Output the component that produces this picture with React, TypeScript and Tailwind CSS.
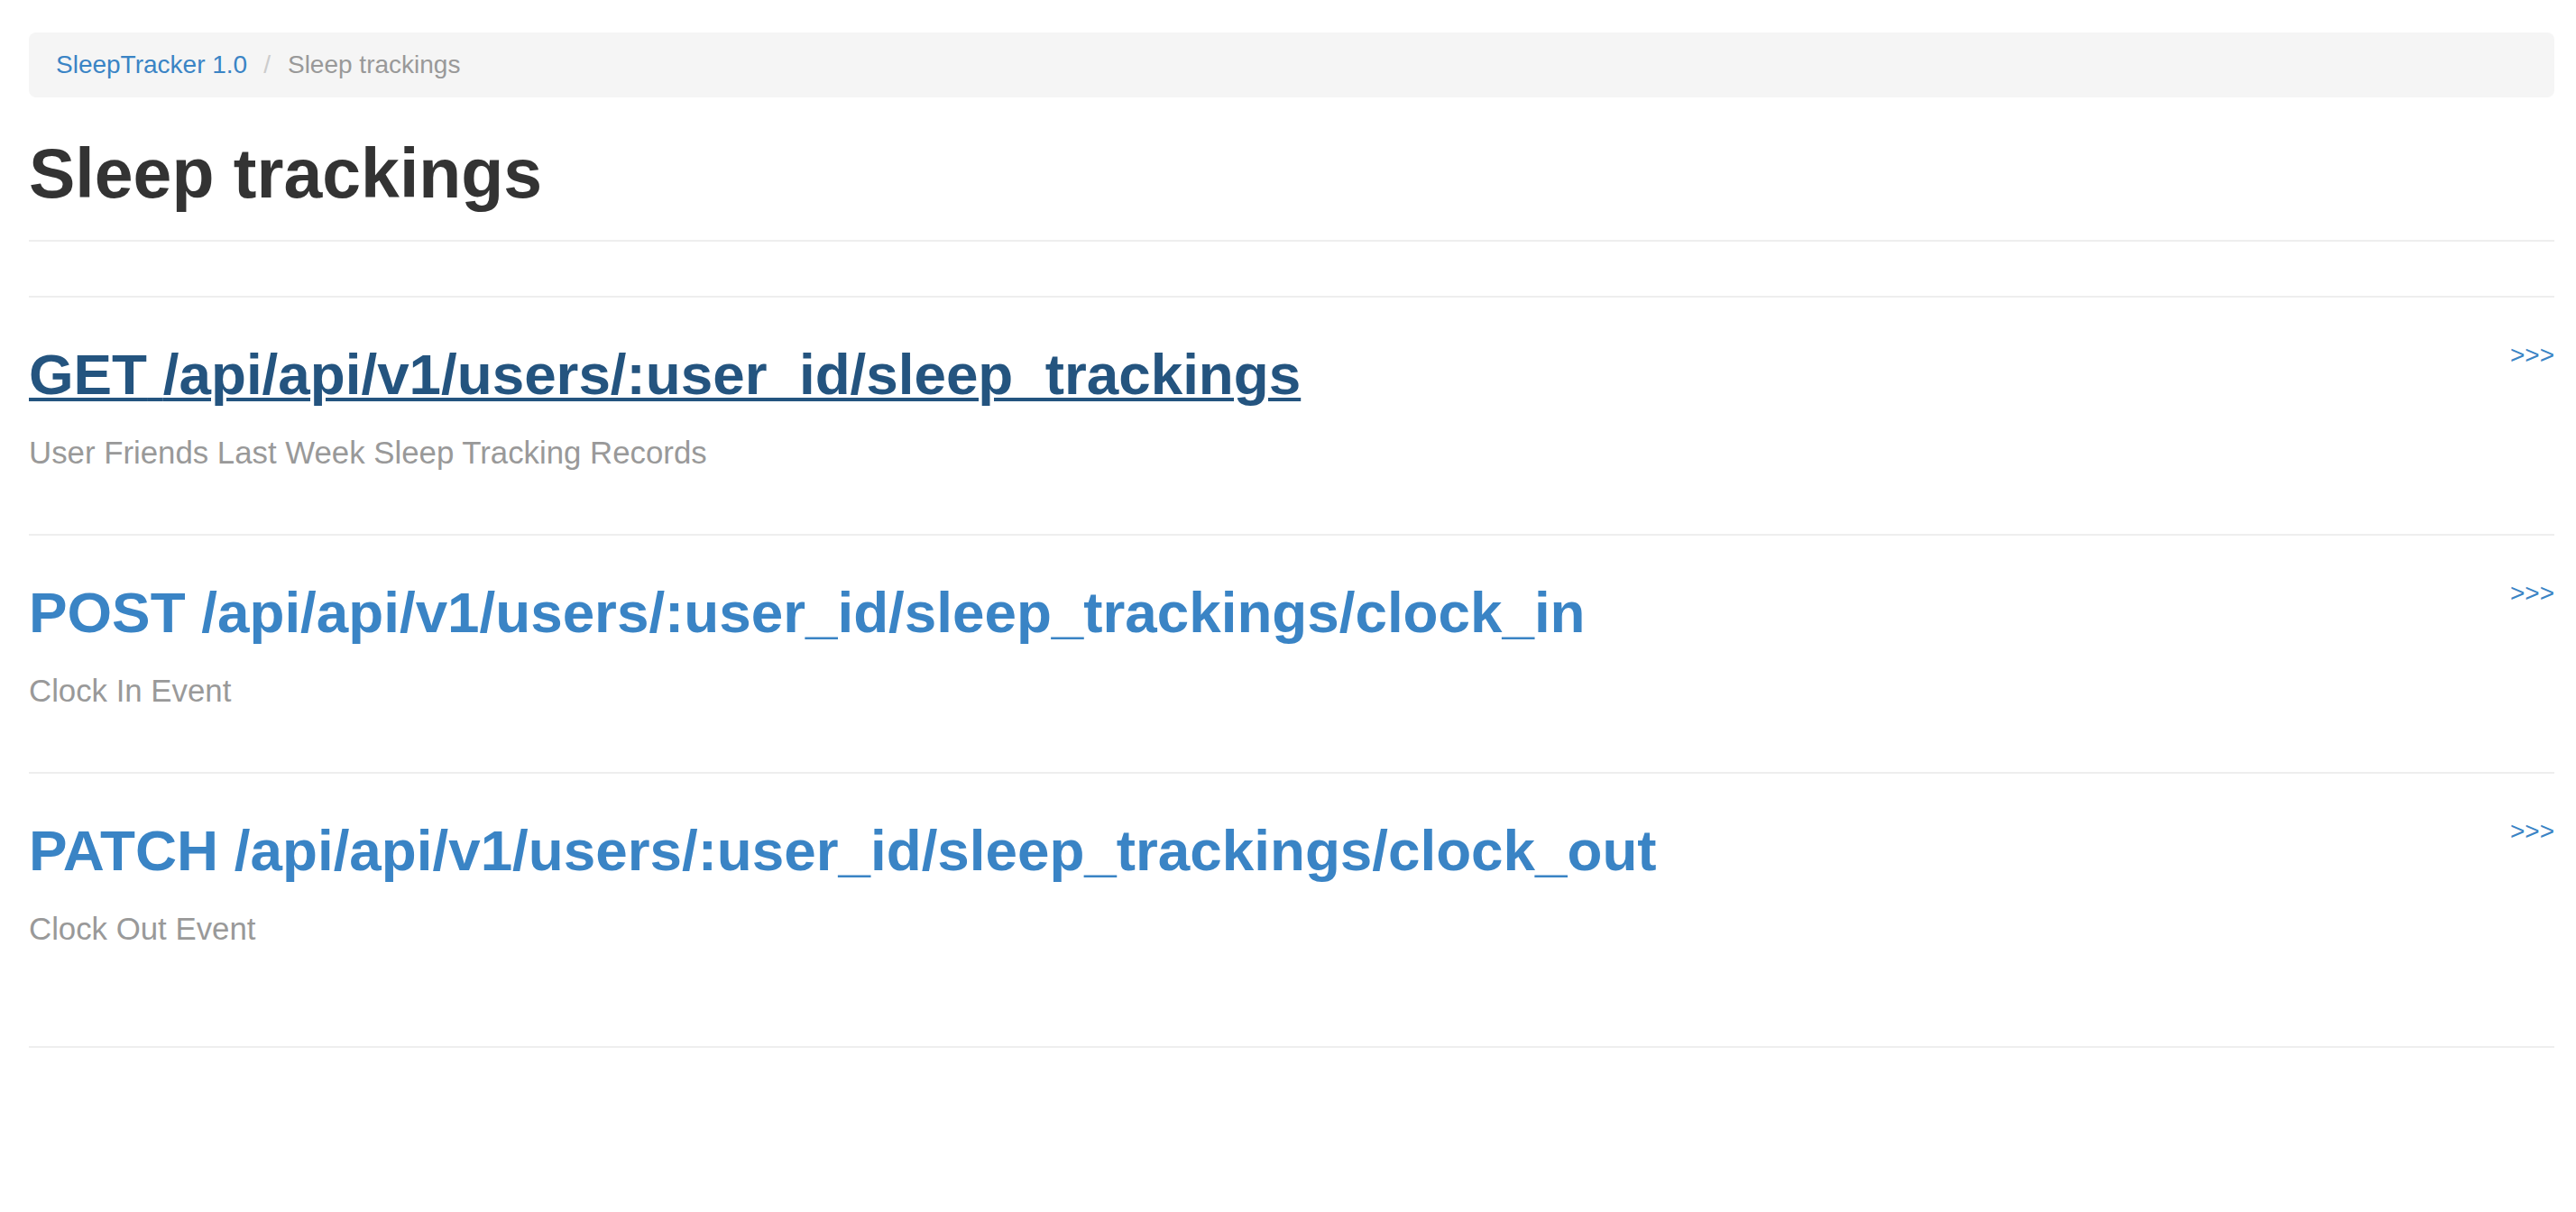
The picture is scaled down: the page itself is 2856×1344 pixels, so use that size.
const FONT = "font-['Liberation_Sans',Arial,sans-serif]";

type Endpoint = {
  method: string;
  path: string;
  description: string;
  active?: boolean;
};

const ENDPOINTS: Endpoint[] = [
  {
    method: "GET",
    path: "/api/api/v1/users/:user_id/sleep_trackings",
    description: "User Friends Last Week Sleep Tracking Records",
    active: true,
  },
  {
    method: "POST",
    path: "/api/api/v1/users/:user_id/sleep_trackings/clock_in",
    description: "Clock In Event",
  },
  {
    method: "PATCH",
    path: "/api/api/v1/users/:user_id/sleep_trackings/clock_out",
    description: "Clock Out Event",
  },
];

export default function App() {
  return (
    <div className={`min-h-screen bg-white ${FONT}`}>
      <div className="ml-[32px] w-[2800px] pt-[36px]">
        <Breadcrumb />

        <div className="border-b-2 border-[#eeeeee] pb-[31px]">
          <h1 className="mt-[42px] text-[77px] font-bold leading-[85px] text-[#333333]">
            Sleep trackings
          </h1>
        </div>

        <div className="mt-[60px]">
          {ENDPOINTS.map((e) => (
            <EndpointRow key={e.method} endpoint={e} />
          ))}
          <div className="mt-[40px] border-t-2 border-[#eeeeee]" />
        </div>
      </div>
    </div>
  );
}

function Breadcrumb() {
  return (
    <div className="flex h-[72px] items-center rounded-[8px] bg-[#f5f5f5] px-[30px] text-[28px] leading-[40px]">
      <a href="#" className="text-[#3a84c5]">
        SleepTracker 1.0
      </a>
      <span className="ml-[18px] mr-[19px] text-[#cccccc]">/</span>
      <span className="text-[#999999]">Sleep trackings</span>
    </div>
  );
}

function EndpointRow({ endpoint }: { endpoint: Endpoint }) {
  const { method, path, description, active } = endpoint;
  return (
    <div className="border-t-2 border-[#eeeeee] pb-[70px] pt-[50px]">
      <div className="flex items-start justify-between">
        <h2 className="text-[63.75px] font-bold leading-[70px]">
          <a
            href="#"
            className={
              active
                ? "text-[#24547f] underline decoration-[4px] underline-offset-[4px]"
                : "text-[#3a84c5]"
            }
          >
            {method} {path}
          </a>
        </h2>
        <a href="#" className="-mt-[6px] text-[28px] leading-[40px] text-[#3a84c5]">
          &gt;&gt;&gt;
        </a>
      </div>
      <p className="mt-[32px] text-[34.8px] leading-[40px] text-[#999999]">{description}</p>
    </div>
  );
}
